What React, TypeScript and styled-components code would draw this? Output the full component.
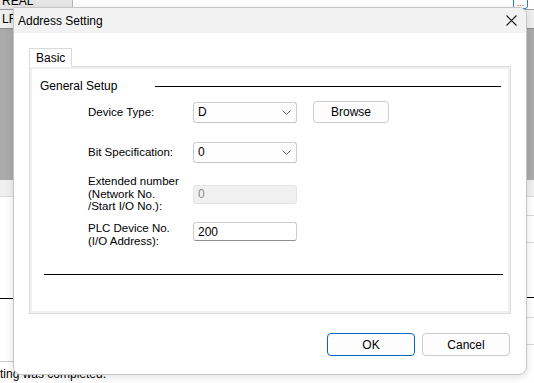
import styled, { createGlobalStyle } from "styled-components";

const GlobalStyle = createGlobalStyle`
  html, body {
    margin: 0;
    padding: 0;
  }
  body {
    width: 534px;
    height: 383px;
    overflow: hidden;
    background: #fff;
    font-family: "Liberation Sans", Arial, sans-serif;
    font-size: 12px;
    color: #000;
  }
`;

const Screen = styled.div`
  position: relative;
  width: 534px;
  height: 383px;
  overflow: hidden;
  display: flex;
  flex-direction: column;
`;

/* ---------- the application behind the dialog ---------- */

const HeaderRow = styled.div`
  position: relative;
  display: flex;
  height: 9px;
  border-bottom: 1px solid #9c9c9c;
`;

const HeaderCell = styled.div`
  width: 70px;
  background: #e6e6e6;
  border-right: 1px solid #b8b8b8;
  line-height: 12px;
  margin-top: -5px;
  padding-left: 2px;
  overflow: hidden;
`;

const MoreButton = styled.div`
  position: absolute;
  right: 6px;
  top: -4px;
  width: 13px;
  height: 11px;
  border: 1px solid #2a7fd4;
  border-radius: 3px;
  background: #fff;
  color: #c03030;
  font-size: 9px;
  line-height: 12px;
  text-align: center;
`;

const LfRow = styled.div`
  height: 18px;
  background: #efefef;
  border-bottom: 1px solid #8c8c8c;
  line-height: 18px;
  padding-left: 2px;
`;

const GrayArea = styled.div`
  height: 151px;
  background: #ababab;
`;

const Band = styled.div`
  height: 16px;
  background: #f0f0f0;
  border-bottom: 1px solid #dcdcdc;
`;

const ListArea = styled.div`
  display: flex;
  height: 165px;
`;

const ListColumn = styled.div<{ $width?: number }>`
  width: ${(p) => (p.$width ? `${p.$width}px` : "auto")};
  flex: ${(p) => (p.$width ? "none" : "1")};
  display: flex;
  flex-direction: column;
`;

const ListRow = styled.div<{ $h: number; $line: string }>`
  height: ${(p) => p.$h}px;
  border-bottom: 1px solid ${(p) => p.$line};
`;

const StatusText = styled.div`
  margin-top: 5px;
  line-height: 14px;
  white-space: nowrap;
`;

/* ---------- dialog window ---------- */

const Dialog = styled.div`
  position: absolute;
  left: 13px;
  top: 7px;
  width: 512px;
  height: 366px;
  border: 1px solid #c6c6c6;
  border-radius: 0 8px 8px 8px;
  background: #fff;
  box-shadow: 0 2px 8px rgba(0, 0, 0, 0.12);
  overflow: hidden;
  display: flex;
  flex-direction: column;
`;

const TitleBar = styled.div`
  height: 25px;
  background: #f2f2f2;
  display: flex;
  align-items: center;
  justify-content: space-between;
  padding-left: 4px;
`;

const Title = styled.div`
  font-size: 12px;
  margin-top: 1px;
`;

const CloseButton = styled.div`
  width: 30px;
  height: 25px;
  display: flex;
  align-items: center;
  justify-content: center;
`;

const Body = styled.div`
  flex: 1;
  padding: 15px 15px 0 15px;
  display: flex;
  flex-direction: column;
`;

const TabStrip = styled.div`
  display: flex;
  position: relative;
  z-index: 1;
  margin-bottom: -1px;
`;

const Tab = styled.div`
  width: 43px;
  height: 19px;
  border: 1px solid #d9d9d9;
  border-bottom: 1px solid #fff;
  background: #fff;
  padding-left: 6px;
  box-sizing: border-box;
  line-height: 18px;
`;

const Panel = styled.div`
  width: 482px;
  height: 248px;
  box-sizing: border-box;
  border: 1px solid #dcdcdc;
  box-shadow: inset 0 0 0 2px #f0f0f0;
  padding: 12px 0 0 10px;
  display: flex;
  flex-direction: column;
`;

const SectionHeader = styled.div`
  display: flex;
  align-items: center;
  height: 14px;
`;

const Rule = styled.div<{ $left: number; $right: number }>`
  flex: 1;
  height: 1px;
  background: #000;
  margin-left: ${(p) => p.$left}px;
  margin-right: ${(p) => p.$right}px;
`;

const Form = styled.div`
  display: flex;
  flex-direction: column;
  margin-left: 48px;
  font-size: 11.5px;
`;

const FormRow = styled.div<{ $top: number; $h: number; $align?: string }>`
  display: flex;
  align-items: ${(p) => p.$align || "center"};
  height: ${(p) => p.$h}px;
  margin-top: ${(p) => p.$top}px;
`;

const Label = styled.div`
  width: 105px;
  line-height: 12.5px;
  white-space: nowrap;
`;

const Field = styled.div<{ $disabled?: boolean; $h: number }>`
  width: 104px;
  height: ${(p) => p.$h}px;
  box-sizing: border-box;
  border: 1px solid ${(p) => (p.$disabled ? "#e3e3e3" : "#cdcdcd")};
  border-bottom-color: ${(p) => (p.$disabled ? "#e3e3e3" : "#8f8f8f")};
  border-radius: 3px;
  background: ${(p) => (p.$disabled ? "#f0f0f0" : "#fff")};
  color: ${(p) => (p.$disabled ? "#8a8a8a" : "#000")};
  font-size: 12px;
  display: flex;
  align-items: center;
  justify-content: space-between;
  padding: 0 5px 0 4px;
`;

const Combo = styled(Field)`
  border-bottom-color: #c4c4c4;
  background: #fefefe;
`;

const PushButton = styled.div<{ $w: number; $h: number; $primary?: boolean }>`
  width: ${(p) => p.$w}px;
  height: ${(p) => p.$h}px;
  box-sizing: border-box;
  border: 1px solid ${(p) => (p.$primary ? "#0067c0" : "#cccccc")};
  border-radius: 4px;
  background: #fdfdfd;
  font-size: 12px;
  display: flex;
  align-items: center;
  justify-content: center;
`;

const Footer = styled.div`
  display: flex;
  justify-content: flex-end;
  gap: 7px;
  margin-top: 19px;
  padding-right: 1px;
`;

const Chevron = () => (
  <svg width="9" height="5" viewBox="0 0 9 5">
    <path d="M0.5 0.5 L4.5 4.5 L8.5 0.5" fill="none" stroke="#606060" strokeWidth="1" />
  </svg>
);

const CloseIcon = () => (
  <svg width="11" height="11" viewBox="0 0 11 11">
    <path d="M0.5 0.5 L10.5 10.5 M10.5 0.5 L0.5 10.5" stroke="#1a1a1a" strokeWidth="1.1" />
  </svg>
);

const App = () => {
  return (
    <Screen>
      <GlobalStyle />

      {/* Application behind the dialog */}
      <HeaderRow>
        <HeaderCell>REAL</HeaderCell>
        <MoreButton>...</MoreButton>
      </HeaderRow>
      <LfRow>LF</LfRow>
      <GrayArea />
      <Band />
      <ListArea>
        <ListColumn $width={300}>
          <ListRow $h={101} $line="#000" />
          <ListRow $h={62} $line="#c8c8c8" />
        </ListColumn>
        <ListColumn>
          <ListRow $h={18} $line="#d6d6d6" />
          <ListRow $h={26} $line="#d6d6d6" />
          <ListRow $h={54} $line="#000" />
          <ListRow $h={19} $line="#d6d6d6" />
          <ListRow $h={26} $line="#d6d6d6" />
        </ListColumn>
      </ListArea>
      <StatusText>ting was completed.</StatusText>

      {/* Address setting dialog */}
      <Dialog>
        <TitleBar>
          <Title>Address Setting</Title>
          <CloseButton>
            <CloseIcon />
          </CloseButton>
        </TitleBar>

        <Body>
          <TabStrip>
            <Tab>Basic</Tab>
          </TabStrip>

          <Panel>
            <SectionHeader>
              General Setup
              <Rule $left={38} $right={9} />
            </SectionHeader>

            <Form>
              <FormRow $top={8} $h={22}>
                <Label>Device Type:</Label>
                <Combo $h={21}>
                  D
                  <Chevron />
                </Combo>
                <PushButton $w={76} $h={22} style={{ marginLeft: 16 }}>
                  Browse
                </PushButton>
              </FormRow>

              <FormRow $top={18} $h={22}>
                <Label>Bit Specification:</Label>
                <Combo $h={21}>
                  0
                  <Chevron />
                </Combo>
              </FormRow>

              <FormRow $top={12} $h={38}>
                <Label>
                  Extended number
                  <br />
                  (Network No.
                  <br />
                  /Start I/O No.):
                </Label>
                <Field $h={19} $disabled>
                  0
                </Field>
              </FormRow>

              <FormRow $top={9} $h={25} $align="flex-start">
                <Label>
                  PLC Device No.
                  <br />
                  (I/O Address):
                </Label>
                <Field $h={19}>200</Field>
              </FormRow>
            </Form>

            <SectionHeader style={{ marginTop: 20 }}>
              <Rule $left={4} $right={7} />
            </SectionHeader>
          </Panel>

          <Footer>
            <PushButton $w={88} $h={23} $primary>
              OK
            </PushButton>
            <PushButton $w={88} $h={23}>
              Cancel
            </PushButton>
          </Footer>
        </Body>
      </Dialog>
    </Screen>
  );
};

export default App;
